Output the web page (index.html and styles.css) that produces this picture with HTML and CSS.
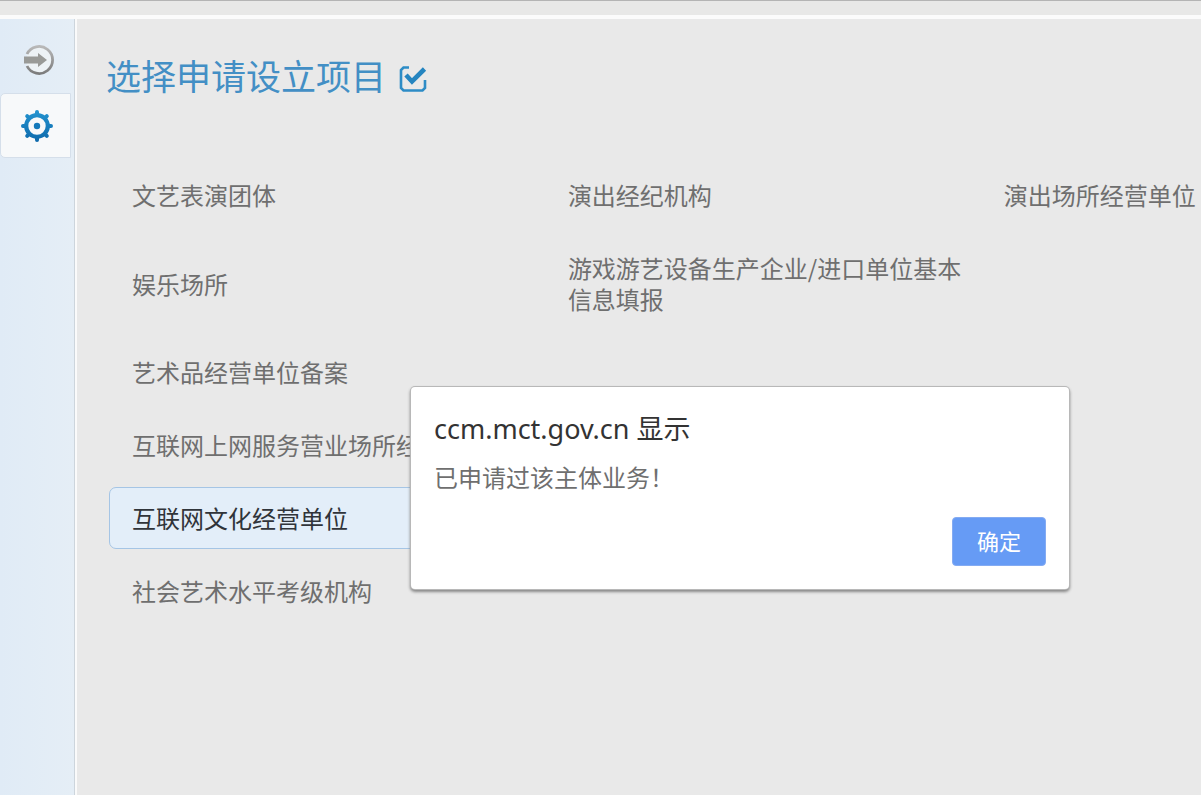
FILE: index.html
```html
<!DOCTYPE html>
<html lang="zh-CN">
<head>
<meta charset="utf-8">
<meta name="viewport" content="width=device-width, initial-scale=1">
<title>选择申请设立项目</title>
<link rel="stylesheet" href="styles.css">
</head>
<body>
<header class="topbar"></header>
<div class="shell">
  <nav class="sidebar">
    <button class="tab" type="button" aria-label="展开">
      <svg class="tab-icon" viewBox="0 0 36 36">
        <defs>
          <linearGradient id="ring" x1="0" y1="0" x2="0" y2="1"><stop offset="0" stop-color="#b8b8b8"/><stop offset="1" stop-color="#7c7c7c"/></linearGradient>
        </defs>
        <path d="M8 11A13.500 13.500 0 1 1 8 23" fill="#edf2f5" stroke="url(#ring)" stroke-width="2.800"/>
        <path d="M5 13.500h14V10l9 7-9 7v-3.500H5z" fill="#999a97"/>
      </svg>
    </button>
    <button class="tab tab-active" type="button" aria-label="设置">
      <svg class="tab-icon" viewBox="0 0 36 36">
        <defs>
          <linearGradient id="gear" gradientUnits="userSpaceOnUse" x1="0" y1="2" x2="0" y2="34"><stop offset="0" stop-color="#2394d0"/><stop offset="1" stop-color="#0d69ab"/></linearGradient>
        </defs>
        <g fill="none" stroke="url(#gear)">
          <circle cx="18" cy="18" r="10.800" stroke-width="4.200"/>
          <g stroke-width="4" stroke-linecap="round">
            <path d="M18.010 4L18 7M18.010 32L18 29M4 18.010L7 18M32 18.010L29 18"/>
            <path d="M8.200 8.200l2 2M27.800 8.200l-2 2M8.200 27.800l2-2M27.800 27.800l-2-2"/>
          </g>
        </g>
        <circle cx="18" cy="18" r="3.200" fill="#1479ba"/>
      </svg>
    </button>
  </nav>
  <main class="content">
    <h1 class="heading">选择申请设立项目
      <svg class="heading-icon" viewBox="0 0 28 28">
        <path d="M10 2.500H4.500L2 5v18l2.500 2.500h19L26 23v-8" fill="none" stroke="#2d8cc6" stroke-width="2.600"/>
        <path d="M7 10l6 6.500L25.500 4" fill="none" stroke="#2585c0" stroke-width="4.600"/>
      </svg>
    </h1>
    <div class="options">
      <button class="option" type="button">文艺表演团体</button>
      <button class="option" type="button">演出经纪机构</button>
      <button class="option" type="button">演出场所经营单位</button>
      <button class="option" type="button">娱乐场所</button>
      <button class="option" type="button">游戏游艺设备生产企业/进口单位基本信息填报</button>
      <button class="option option-first" type="button">艺术品经营单位备案</button>
      <button class="option option-first" type="button">互联网上网服务营业场所经</button>
      <button class="option option-first option-selected" type="button">互联网文化经营单位</button>
      <button class="option option-first" type="button">社会艺术水平考级机构</button>
    </div>
  </main>
</div>
<div class="dialog" role="alertdialog" aria-labelledby="dialog-title" aria-describedby="dialog-text">
  <h2 class="dialog-title" id="dialog-title">ccm.mct.gov.cn 显示</h2>
  <p class="dialog-text" id="dialog-text">已申请过该主体业务！</p>
  <div class="dialog-actions">
    <button class="confirm" type="button">确定</button>
  </div>
</div>
</body>
</html>
```
FILE: styles.css
```css
* {
  box-sizing: border-box;
}

body {
  margin: 0;
  min-height: 100vh;
  display: flex;
  flex-direction: column;
  background: #e9e9e9;
  color: #6f6f6f;
  font-family: "Noto Sans CJK SC", "Noto Sans", sans-serif;
  font-size: 24px;
}

button {
  margin: 0;
  font: inherit;
  color: inherit;
}

.topbar {
  height: 19px;
  border-top: 1px solid #b4b4b4;
  border-bottom: 4px solid #fbfbfb;
  background: #e8e8e7;
}

.shell {
  flex: 1;
  display: flex;
}

.sidebar {
  flex: none;
  width: 77px;
  padding: 9px 4px 0 0;
  border-right: 2px solid #fafafa;
  background: linear-gradient(90deg, #e0ebf6, #e5eef6);
  box-shadow: inset -1px 0 #cdd5dc;
}

.tab {
  display: flex;
  align-items: center;
  justify-content: center;
  width: 100%;
  height: 65px;
  padding: 0 0 0 2px;
  border: 1px solid transparent;
  border-radius: 5px 0 0 5px;
  background: none;
}

.tab-active {
  border-color: #d5dfea;
  background: #f7f9fa;
}

.tab-icon {
  flex: none;
  width: 36px;
  height: 36px;
}

.content {
  flex: 1;
  min-width: 0;
  padding: 30px 0 0 32px;
}

.heading {
  display: flex;
  align-items: center;
  gap: 13px;
  margin: 0 0 63px -3px;
  color: #438fc5;
  font-size: 35px;
  font-weight: 400;
  line-height: 52px;
}

.heading-icon {
  width: 28px;
  height: 28px;
  margin-top: 8px;
}

.options {
  display: grid;
  grid-template-columns: 39% 39% 1fr;
  gap: 11px 10px;
}

.option {
  padding: 14px 0 15px 22px;
  border: 1px solid transparent;
  border-radius: 7px;
  background: none;
  line-height: 31px;
  text-align: left;
}

.option-first {
  grid-column: 1;
}

.option-selected {
  border-color: #a5c5e5;
  background: #e3eef9;
  color: #30343a;
}

.dialog {
  position: absolute;
  top: 387px;
  left: 411px;
  width: 658px;
  padding: 22px 23px 23px;
  border-radius: 4px;
  background: #fff;
  box-shadow: 0 0 0 1px #b8b8b8, 0 2px 3px 1px #888;
}

.dialog-title {
  margin: 0 0 10px;
  color: #333;
  font-family: "Noto Sans", "Noto Sans CJK SC", sans-serif;
  font-size: 27px;
  font-weight: 400;
  line-height: 40px;
}

.dialog-text {
  margin: 0 0 22px;
  line-height: 36px;
}

.dialog-actions {
  display: flex;
  justify-content: flex-end;
}

.confirm {
  padding: 7px 24px 10px;
  border: 1px solid #84abf2;
  border-radius: 4px;
  background: #669bf5;
  color: #fff;
  font-size: 22px;
  line-height: 30px;
}
```
